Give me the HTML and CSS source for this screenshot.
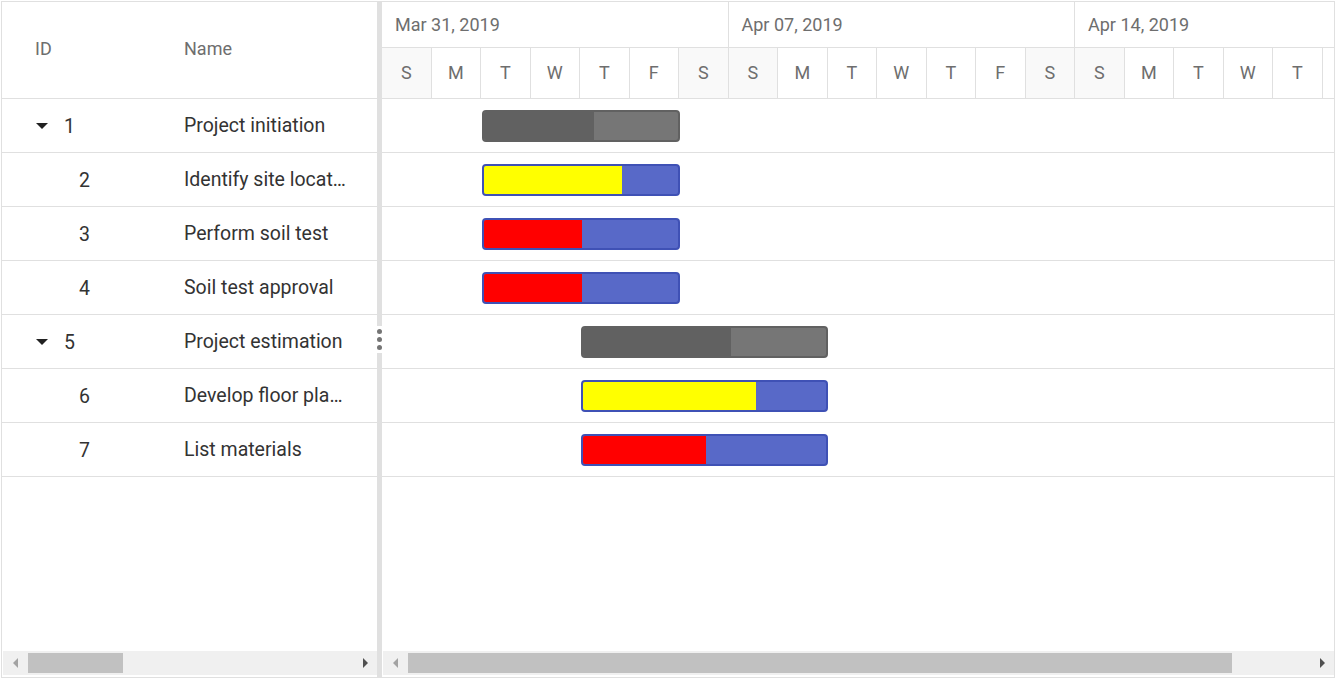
FILE: index.html
```html
<!DOCTYPE html>
<html lang="en">
<head>
    <meta charset="UTF-8">
    <meta name="viewport" content="width=device-width, initial-scale=1.0">
    <title>Project schedule</title>
    <link rel="stylesheet" href="styles.css">
</head>
<body>
    <div class="gantt">
        <!-- left side: task tree grid -->
        <div class="grid-pane">
            <div class="grid-header">
                <div class="col-id">ID</div>
                <div class="col-name">Name</div>
            </div>
            <div class="grid-body">
                <div class="grid-row">
                    <div class="col-id"><span class="expander"></span>1</div>
                    <div class="col-name">Project initiation</div>
                </div>
                <div class="grid-row">
                    <div class="col-id child">2</div>
                    <div class="col-name">Identify site location</div>
                </div>
                <div class="grid-row">
                    <div class="col-id child">3</div>
                    <div class="col-name">Perform soil test</div>
                </div>
                <div class="grid-row">
                    <div class="col-id child">4</div>
                    <div class="col-name">Soil test approval</div>
                </div>
                <div class="grid-row">
                    <div class="col-id"><span class="expander"></span>5</div>
                    <div class="col-name">Project estimation</div>
                </div>
                <div class="grid-row">
                    <div class="col-id child">6</div>
                    <div class="col-name">Develop floor plan for estimation</div>
                </div>
                <div class="grid-row">
                    <div class="col-id child">7</div>
                    <div class="col-name">List materials</div>
                </div>
            </div>
            <div class="hscroll">
                <span class="arrow arrow-left"></span>
                <div class="track"><div class="thumb" style="width: 95px;"></div></div>
                <span class="arrow arrow-right active"></span>
            </div>
        </div>

        <div class="splitter">
            <span class="grip"><i></i><i></i><i></i></span>
        </div>

        <!-- right side: timeline and bars -->
        <div class="chart-pane">
            <div class="timeline">
                <div class="week-row">
                    <div class="week">Mar 31, 2019</div>
                    <div class="week">Apr 07, 2019</div>
                    <div class="week">Apr 14, 2019</div>
                </div>
                <div class="day-row">
                    <div class="day weekend">S</div><div class="day">M</div><div class="day">T</div><div class="day">W</div><div class="day">T</div><div class="day">F</div><div class="day weekend">S</div>
                    <div class="day weekend">S</div><div class="day">M</div><div class="day">T</div><div class="day">W</div><div class="day">T</div><div class="day">F</div><div class="day weekend">S</div>
                    <div class="day weekend">S</div><div class="day">M</div><div class="day">T</div><div class="day">W</div><div class="day">T</div><div class="day">F</div><div class="day weekend">S</div>
                </div>
            </div>
            <div class="chart-body">
                <div class="chart-row">
                    <div class="bar parent" style="left: 100px; width: 198px;"><div class="progress" style="width: 110px;"></div></div>
                </div>
                <div class="chart-row">
                    <div class="bar" style="left: 100px; width: 198px;"><div class="progress yellow" style="width: 138px;"></div></div>
                </div>
                <div class="chart-row">
                    <div class="bar" style="left: 100px; width: 198px;"><div class="progress red" style="width: 98px;"></div></div>
                </div>
                <div class="chart-row">
                    <div class="bar" style="left: 100px; width: 198px;"><div class="progress red" style="width: 98px;"></div></div>
                </div>
                <div class="chart-row">
                    <div class="bar parent" style="left: 199px; width: 247px;"><div class="progress" style="width: 148px;"></div></div>
                </div>
                <div class="chart-row">
                    <div class="bar" style="left: 199px; width: 247px;"><div class="progress yellow" style="width: 173px;"></div></div>
                </div>
                <div class="chart-row">
                    <div class="bar" style="left: 199px; width: 247px;"><div class="progress red" style="width: 123px;"></div></div>
                </div>
            </div>
            <div class="hscroll">
                <span class="arrow arrow-left"></span>
                <div class="track"><div class="thumb" style="width: 824px;"></div></div>
                <span class="arrow arrow-right active"></span>
            </div>
        </div>
    </div>
</body>
</html>
```

FILE: styles.css
```css
*{
    padding: 0;margin: 0;
    box-sizing: border-box;
}
body{
    font-family: Roboto, "Liberation Sans", sans-serif;
    background-color: white;
}
.gantt{
    display: flex;
    width: 1334px;
    height: 677px;
    margin: 1px 0 0 1px;
    border: 1px solid #e0e0e0;
    overflow: hidden;
}

/* tree grid */
.grid-pane{
    width: 375px;
    display: flex;
    flex-direction: column;
}
.grid-header{
    display: flex;
    height: 97px;
    padding-bottom: 4px;
    border-bottom: 1px solid #e0e0e0;
    color: #6e6e6e;
    font-size: 18px;
}
.grid-header > div{
    display: flex;
    align-items: center;
}
.grid-body{
    flex: 1;
}
.grid-row{
    display: flex;
    height: 54px;
    padding-top: 1px;
    border-bottom: 1px solid #e0e0e0;
    color: #333;
    font-size: 19.5px;
}
.grid-row > div{
    display: flex;
    align-items: center;
}
.col-id{
    width: 170px;
    padding-left: 33px;
}
.grid-row .col-id{
    padding-left: 32px;
}
.grid-row .col-id.child{
    padding-left: 77px;
}
.col-name{
    width: 205px;
    padding-left: 12px;
    padding-right: 28px;
    white-space: nowrap;
}
.grid-row .col-name{
    display: block;
    line-height: 52px;
    overflow: hidden;
    text-overflow: ellipsis;
}
.expander{
    width: 30px;
    height: 6px;
    position: relative;
}
.expander::before{
    content: "";
    position: absolute;
    left: 2px;
    top: 0;
    border-left: 6px solid transparent;
    border-right: 6px solid transparent;
    border-top: 6px solid #212121;
}

/* splitter between the panes */
.splitter{
    width: 5px;
    background-color: #e0e0e0;
    display: flex;
    align-items: center;
    justify-content: center;
}
.grip{
    display: flex;
    flex-direction: column;
    gap: 3px;
    padding: 3px 0;
    width: 6px;
    align-items: center;
    background-color: white;
}
.grip i{
    width: 5px;
    height: 5px;
    border-radius: 50%;
    background-color: #757575;
}

/* chart */
.chart-pane{
    flex: 1;
    display: flex;
    flex-direction: column;
    overflow: hidden;
}
.timeline{
    height: 97px;
    border-bottom: 1px solid #e0e0e0;
    color: #6e6e6e;
    font-size: 18px;
}
.week-row{
    display: flex;
    height: 46px;
    border-bottom: 1px solid #e0e0e0;
}
.week{
    flex: 0 0 346.5px;
    padding-left: 13px;
    line-height: 45px;
    border-right: 1px solid #e0e0e0;
}
.day-row{
    display: flex;
    height: 50px;
}
.day{
    flex: 0 0 49.5px;
    text-align: center;
    line-height: 50px;
    border-right: 1px solid #e0e0e0;
}
.day.weekend{
    background-color: #f9f9f9;
}
.chart-body{
    flex: 1;
}
.chart-row{
    position: relative;
    height: 54px;
    border-bottom: 1px solid #e0e0e0;
}
.bar{
    position: absolute;
    top: 11px;
    height: 32px;
    border: 2px solid #3f51b5;
    border-radius: 4px;
    background-color: #5869c8;
    overflow: hidden;
}
.bar.parent{
    border-color: #616161;
    background-color: #767676;
}
.progress{
    height: 100%;
    background-color: #616161;
}
.progress.yellow{
    background-color: #ffff00;
}
.progress.red{
    background-color: #ff0000;
}

/* horizontal scrollbars */
.hscroll{
    display: flex;
    height: 24px;
    margin: 0 0 2px 1px;
    background-color: #f0f0f0;
}
.arrow{
    width: 25px;
    position: relative;
}
.arrow::before{
    content: "";
    position: absolute;
    top: 7px;
    border-top: 5px solid transparent;
    border-bottom: 5px solid transparent;
}
.arrow-left::before{
    left: 10px;
    border-right: 5px solid #a3a3a3;
}
.arrow-right::before{
    left: 11px;
    border-left: 5px solid #a3a3a3;
}
.arrow-right.active::before{
    border-left-color: #505050;
}
.track{
    flex: 1;
    padding: 2px 0;
}
.thumb{
    height: 100%;
    background-color: #c1c1c1;
}
```
